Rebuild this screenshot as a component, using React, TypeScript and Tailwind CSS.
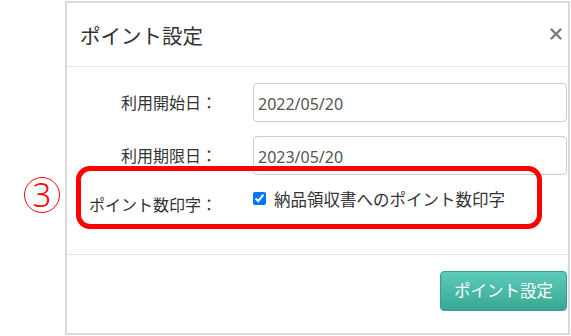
import React from 'react';

const font = { fontFamily: '"Noto Sans", "Noto Sans CJK JP", sans-serif' };

const DateRow = ({ label, value }: { label: string; value: string }) => (
  <div className="flex items-center h-[39px]">
    <div className="w-[150px] text-right text-[16px] leading-6 text-[#333]">{label}</div>
    <div className="ml-[36px] flex-1 h-[39px] border border-[#ccc] rounded-[4px] flex items-center px-[4px] pt-[3px] text-[16px] text-[#555]">
      {value}
    </div>
  </div>
);

export default function App() {
  return (
    <div className="relative w-[571px] h-[336px] bg-white overflow-hidden" style={font}>
      {/* Dialog */}
      <div className="ml-[65px] mt-[1px] w-[505px] h-[334px] border-2 border-[#dadada] bg-white flex flex-col">
        {/* Header */}
        <div className="h-[64px] border-b border-[#e5e5e5] flex items-center justify-between pl-[13px] pr-[5px]">
          <span className="text-[20.5px] text-[#333] leading-7 mt-[2px]">ポイント設定</span>
          <svg width="12" height="12" viewBox="0 0 12 12" className="mr-[1px] mt-[-2px]">
            <path d="M1.5 1.5 L10.5 10.5 M10.5 1.5 L1.5 10.5" stroke="#7a7a7a" strokeWidth="2.4" strokeLinecap="round" />
          </svg>
        </div>

        {/* Body */}
        <div className="h-[188px] border-b border-[#e5e5e5] pt-[16px] pr-[1px] flex flex-col gap-[14px]">
          <DateRow label="利用開始日：" value="2022/05/20" />
          <DateRow label="利用期限日：" value="2023/05/20" />
          <div className="flex items-start mt-[-1px]">
            <div className="w-[150px] text-right text-[16px] leading-6 text-[#333] mt-[5px]">ポイント数印字：</div>
            <label className="ml-[36px] flex items-center">
              <input type="checkbox" defaultChecked className="w-[13px] h-[13px] m-0 mt-[-3px] accent-[#0075ff]" />
              <span className="ml-[8px] text-[16.5px] leading-6 text-[#333]">納品領収書へのポイント数印字</span>
            </label>
          </div>
        </div>

        {/* Footer */}
        <div className="flex justify-end pt-[16px] pr-[1px]">
          <button className="w-[127px] h-[40px] rounded-[4px] border border-[#33a08c] bg-gradient-to-b from-[#5ccbbb] to-[#38a892] text-white text-[16.5px] leading-6">
            ポイント設定
          </button>
        </div>
      </div>

      {/* Annotation */}
      <span className="absolute left-[24px] top-[177px] w-[36px] h-[36px] rounded-full border-[1.5px] border-[#ff0000] flex items-center justify-center text-[33px] leading-none font-light text-[#ff0000] pb-[2px]">
        3
      </span>
      <div className="absolute left-[76px] top-[166px] w-[466px] h-[63px] border-[5px] border-[#ff0000] rounded-[14px]" />
    </div>
  );
}
